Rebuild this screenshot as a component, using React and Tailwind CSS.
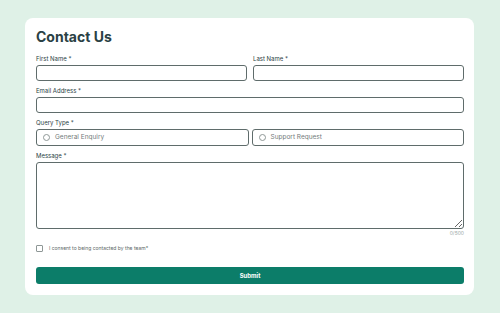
import React, { useState } from 'react';

function Label({ children }) {
  return (
    <label className="block text-[6px] leading-[8px] text-[#2a4144] mb-[2px]">
      {children} *
    </label>
  );
}

function RadioOption({ label, checked, onChange }) {
  return (
    <label className="flex-1 h-[17px] flex items-center gap-[5px] px-[6px] border border-[#5f6c6b] rounded-[3px] cursor-pointer">
      <span className={`w-[7px] h-[7px] rounded-full border ${checked ? 'border-[#0c7d69] bg-[#0c7d69]' : 'border-[#8e9796]'}`}></span>
      <span className="text-[6.5px] leading-none text-[#737b7b]">{label}</span>
      <input type="radio" className="hidden" checked={checked} onChange={onChange} />
    </label>
  );
}

export default function App() {
  const [query, setQuery] = useState('');
  const [message, setMessage] = useState('');
  const [consent, setConsent] = useState(false);

  const inputCls = 'block w-full h-[16px] border border-[#5f6c6b] rounded-[3px]';

  return (
    <div className="w-[500px] h-[313px] bg-[#dff1e7] pt-[18px] pl-[25px]" style={{ fontFamily: 'Inter, "Liberation Sans", sans-serif' }}>
      <div className="w-[449px] h-[277px] bg-white rounded-[8px] pl-[11px] pr-[10px] pt-[10px]">
        <h1 className="text-[14px] leading-[17px] font-bold text-[#2a4144] mb-[10px]">Contact Us</h1>

        <div className="flex gap-[6px]">
          <div className="flex-1">
            <Label>First Name</Label>
            <input className={inputCls} />
          </div>
          <div className="flex-1">
            <Label>Last Name</Label>
            <input className={inputCls} />
          </div>
        </div>

        <div className="mt-[6px]">
          <Label>Email Address</Label>
          <input className={inputCls} />
        </div>

        <div className="mt-[6px]">
          <Label>Query Type</Label>
          <div className="flex gap-[3px] mt-[1px]">
            <RadioOption label="General Enquiry" checked={query === 'general'} onChange={() => setQuery('general')} />
            <RadioOption label="Support Request" checked={query === 'support'} onChange={() => setQuery('support')} />
          </div>
        </div>

        <div className="mt-[6px]">
          <Label>Message</Label>
          <textarea
            className="block w-full h-[67px] border border-[#5f6c6b] rounded-[3px] resize-y"
            maxLength={500}
            value={message}
            onChange={(e) => setMessage(e.target.value)}
          />
          <div className="text-right text-[5px] leading-[7px] text-[#9aa7a5] mt-[1px]">{message.length}/500</div>
        </div>

        <label className="flex items-center gap-[6px] mt-[8px] cursor-pointer">
          <input
            type="checkbox"
            checked={consent}
            onChange={(e) => setConsent(e.target.checked)}
            className="appearance-none w-[7px] h-[7px] border border-[#8e9796] rounded-[1px] checked:bg-[#0c7d69]"
          />
          <span className="text-[5px] leading-none text-[#5b6866]">I consent to being contacted by the team*</span>
        </label>

        <button className="block w-full h-[17px] mt-[15px] bg-[#0c7d69] rounded-[3px] text-white text-[6px] font-bold">
          Submit
        </button>
      </div>
    </div>
  );
}
